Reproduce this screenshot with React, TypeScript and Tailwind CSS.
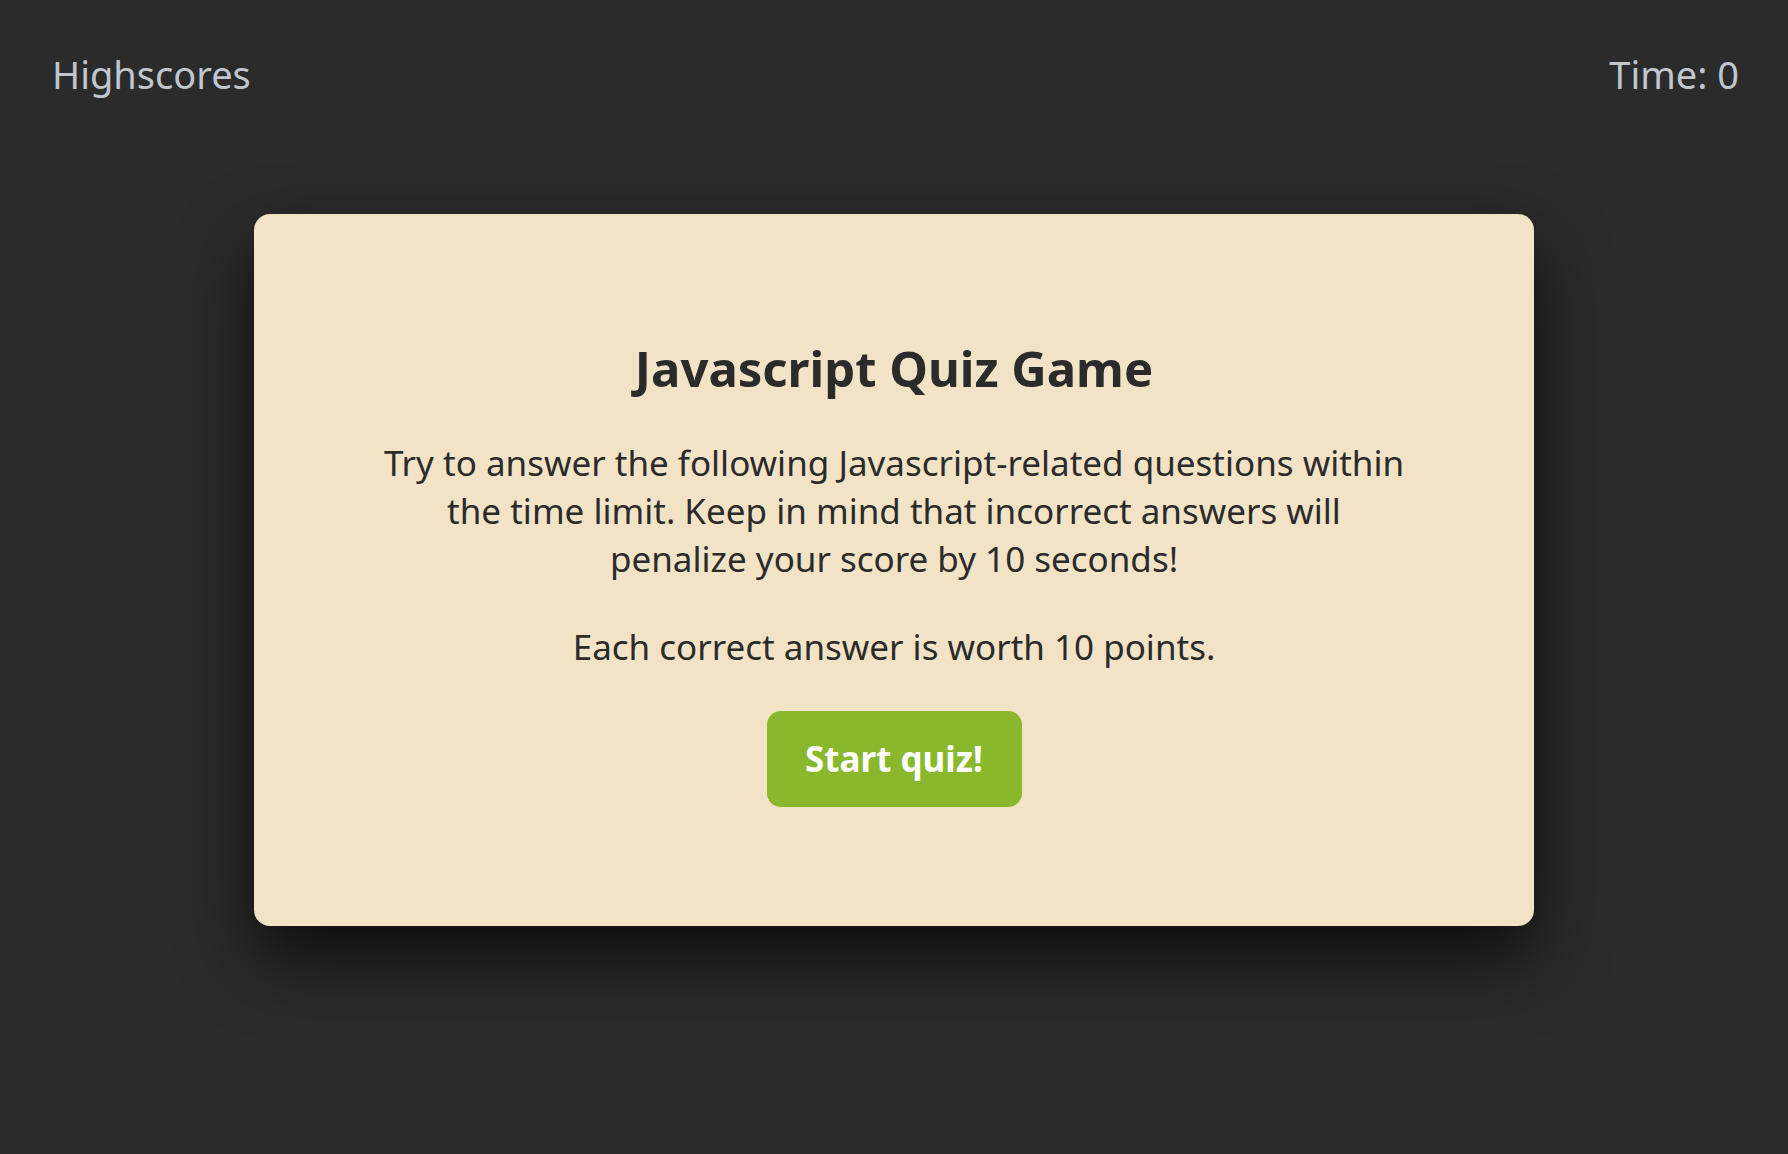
import React from "react";

export default function App() {
  const font = { fontFamily: '"Trebuchet MS", "Noto Sans", sans-serif' };
  return (
    <div className="min-h-[1154px] w-full bg-[#2b2b2b] text-[#2b2b2b]" style={font}>
      <header className="flex items-center justify-between pl-[52px] pr-[49px] pt-[44px] text-[38px] leading-[60px] text-[#c0c5ce]">
        <a href="#" className="cursor-pointer">Highscores</a>
        <div>Time: 0</div>
      </header>
      <main className="flex justify-center pt-[110px]">
        <section className="flex h-[712px] w-[1280px] flex-col items-center rounded-[16px] bg-[#f2e3c6] pt-[124px] text-center shadow-[0_32px_70px_rgba(0,0,0,0.7)]">
          <h1 className="text-[49px] font-bold leading-[60px]">Javascript Quiz Game</h1>
          <p className="mt-[41px] text-[35px] leading-[48px]">
            Try to answer the following Javascript-related questions within
            <br />
            the time limit. Keep in mind that incorrect answers will
            <br />
            penalize your score by 10 seconds!
          </p>
          <p className="mt-[40px] text-[35px] leading-[48px]">Each correct answer is worth 10 points.</p>
          <button className="mt-[40px] h-[96px] w-[255px] rounded-[14px] bg-[#89b82c] text-[35px] font-bold text-white">
            Start quiz!
          </button>
        </section>
      </main>
    </div>
  );
}
